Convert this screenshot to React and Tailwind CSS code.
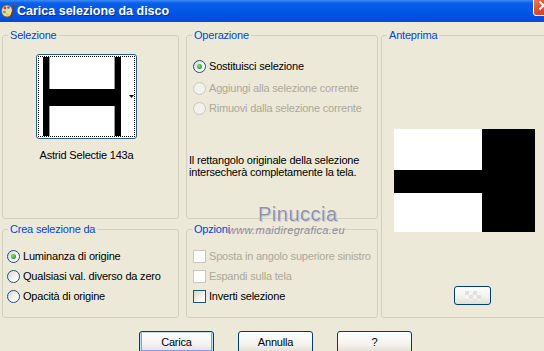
import React from "react";

const font = "font-['Liberation_Sans',Arial,sans-serif]";

function AppIcon() {
  return (
    <svg width="14" height="16" viewBox="0 0 14 16" className="shrink-0">
      <ellipse cx="6" cy="8" rx="5.5" ry="6" fill="#f2d7a0" stroke="#8a5a2a" strokeWidth="0.8" />
      <circle cx="4" cy="5" r="1.4" fill="#e23a2a" />
      <circle cx="7.5" cy="4.5" r="1.3" fill="#2a7de2" />
      <circle cx="3.5" cy="9" r="1.3" fill="#2ab84a" />
      <circle cx="6.5" cy="11.5" r="1.2" fill="#f2c12a" />
      <path d="M9 14 L13 2 L14 2.5 L10.5 14.5 Z" fill="#6b3a1a" />
      <path d="M12.6 1.5 L13.8 0.5 L14 2.6 Z" fill="#d04020" />
    </svg>
  );
}

function TitleBar() {
  return (
    <div className="flex h-[22px] items-center bg-[linear-gradient(to_bottom,#3d8df7_0%,#0b5fe9_14%,#0056e6_55%,#004bd6_100%)] pl-[1px]">
      <AppIcon />
      <span className="ml-[2px] text-[12.5px] font-bold tracking-normal text-white [text-shadow:1px_1px_0_#0a2f8c]">
        Carica selezione da disco
      </span>
      <div className="-mr-[10px] -mt-[5px] ml-auto flex h-[21px] w-[21px] shrink-0 items-center justify-center self-start rounded-[3px] border border-white bg-[linear-gradient(135deg,#f08a6a,#e0502a_45%,#c83a18)]">
        <svg width="11" height="11" viewBox="0 0 11 11">
          <path d="M1.5 1.5 L9.5 9.5 M9.5 1.5 L1.5 9.5" stroke="white" strokeWidth="2" />
        </svg>
      </div>
    </div>
  );
}

function Group({ title, className, children }) {
  return (
    <fieldset className={`rounded-[3px] border border-[#D0D0BF] ${className}`}>
      <legend className="ml-[5px] px-[2px] leading-[13px] text-[#0046D5]">{title}</legend>
      {children}
    </fieldset>
  );
}

function Radio({ label, checked, disabled }) {
  return (
    <div className="flex h-[20px] items-center whitespace-nowrap">
      <span
        className={`flex h-[13px] w-[13px] shrink-0 items-center justify-center rounded-full border ${
          disabled
            ? "border-[#CAC8BB] bg-[#F2F1EA]"
            : "border-[#1C5180] bg-[linear-gradient(135deg,#d8d5c6,#ffffff_75%)]"
        }`}
      >
        {checked && (
          <span className="h-[5px] w-[5px] rounded-full bg-[radial-gradient(circle_at_40%_40%,#8ee08e,#21a121_70%)]" />
        )}
      </span>
      <span className={`ml-[3px] ${disabled ? "text-[#ACA899]" : "text-black"}`}>{label}</span>
    </div>
  );
}

function Check({ label, disabled }) {
  return (
    <div className="flex h-[20px] items-center whitespace-nowrap">
      <span
        className={`h-[13px] w-[13px] shrink-0 border ${
          disabled
            ? "border-[#CAC8BB] bg-white"
            : "border-[#1C5180] bg-[linear-gradient(135deg,#d8d5c6,#ffffff_80%)]"
        }`}
      />
      <span className={`ml-[3px] ${disabled ? "text-[#ACA899]" : "text-black"}`}>{label}</span>
    </div>
  );
}

function Thumbnail() {
  return (
    <div className="ml-[33px] mt-[12px] h-[85px] w-[101px] rounded-[3px] border border-[#2B5B8C] bg-white p-[1px]">
      <div className="h-full w-full border border-dotted border-black">
        <svg width="95" height="79" viewBox="0 0 95 79" className="block">
          <rect x="4" y="0" width="6" height="79" fill="#000" />
          <rect x="76" y="0" width="6" height="79" fill="#000" />
          <rect x="10" y="32" width="66" height="17" fill="#000" />
          <path d="M10.5 0 V32 M10.5 49 V79 M75.5 0 V32 M75.5 49 V79" stroke="#9a9a9a" strokeWidth="1" />
          <path d="M90 38 L95 38 L92.5 41 Z" fill="#000" />
        </svg>
      </div>
    </div>
  );
}

function Preview() {
  return (
    <svg width="141" height="103" viewBox="0 0 141 103" className="ml-[12px] mt-[87px] block">
      <rect width="141" height="103" fill="#fff" />
      <rect x="88" y="0" width="53" height="103" fill="#000" />
      <rect x="0" y="41" width="88" height="23" fill="#000" />
    </svg>
  );
}

function Button({ children, primary, className = "" }) {
  return (
    <button
      className={`h-[23px] w-[75px] rounded-[3px] border border-[#003C74] bg-[linear-gradient(to_bottom,#ffffff,#f3f2ee_60%,#dedbd0)] text-black ${
        primary ? "shadow-[inset_0_0_0_1px_#c5d9fb,inset_0_-1px_0_2px_#7d9df0]" : ""
      } ${className}`}
    >
      {children}
    </button>
  );
}

export default function App() {
  return (
    <div className={`relative h-[351px] w-[544px] overflow-hidden bg-[#ECE9D8] text-[11px] tracking-[-0.2px] text-black ${font}`}>
      <TitleBar />
      <div className="flex pl-[2px] pt-[7px]">
        <div className="flex w-[177px] shrink-0 flex-col">
          <Group title="Selezione" className="h-[190px]">
            <Thumbnail />
            <div className="ml-[33px] mt-[10px] w-[101px] text-center leading-[13px]">
              Astrid Selectie 143a
            </div>
          </Group>
          <Group title="Crea selezione da" className="mt-[4px] h-[95px]">
            <div className="ml-[4px] mt-[10px]">
              <Radio label="Luminanza di origine" checked />
              <Radio label="Qualsiasi val. diverso da zero" />
              <Radio label="Opacità di origine" />
            </div>
          </Group>
        </div>

        <div className="ml-[7px] flex w-[192px] shrink-0 flex-col">
          <Group title="Operazione" className="h-[190px]">
            <div className="ml-[6px] mt-[14px]">
              <Radio label="Sostituisci selezione" checked />
              <div className="mt-[2px]">
                <Radio label="Aggiungi alla selezione corrente" disabled />
              </div>
              <Radio label="Rimuovi dalla selezione corrente" disabled />
            </div>
            <p className="ml-[2px] mt-[36px] leading-[12px]">
              Il rettangolo originale della selezione
              <br />
              intersecherà completamente la tela.
            </p>
          </Group>
          <Group title="Opzioni" className="mt-[4px] h-[95px]">
            <div className="ml-[6px] mt-[10px]">
              <Check label="Sposta in angolo superiore sinistro" disabled />
              <Check label="Espandi sulla tela" disabled />
              <Check label="Inverti selezione" />
            </div>
          </Group>
        </div>

        <div className="ml-[3px] w-[175px] shrink-0">
          <Group title="Anteprima" className="h-[289px]">
            <Preview />
            <button className="ml-[72px] mt-[54px] flex h-[19px] w-[37px] items-center justify-center rounded-[3px] border border-[#003C74] bg-[linear-gradient(to_bottom,#ffffff,#f1f0ea_60%,#e2dfd4)]">
              <span className="h-[9px] w-[16px] bg-[repeating-conic-gradient(#f4f4f4_0%_25%,#e0e0e0_0%_50%)] bg-[length:8px_8px]" />
            </button>
          </Group>
        </div>
      </div>

      <div className="ml-[139px] mt-[13px] flex gap-[24px]">
        <Button primary>Carica</Button>
        <Button>Annulla</Button>
        <Button>?</Button>
      </div>

      <div className="pointer-events-none absolute left-[258px] top-[199px] text-[20px] tracking-[0.5px] text-[#9090A8] [text-shadow:0_0_1px_#ffffff,1px_1px_0_#c8c8d4]">
        Pinuccia
      </div>
      <div className="pointer-events-none absolute left-[228px] top-[222px] text-[11px] italic tracking-[0.3px] text-[#8C8C9E]">
        www.maidiregrafica.eu
      </div>
    </div>
  );
}
